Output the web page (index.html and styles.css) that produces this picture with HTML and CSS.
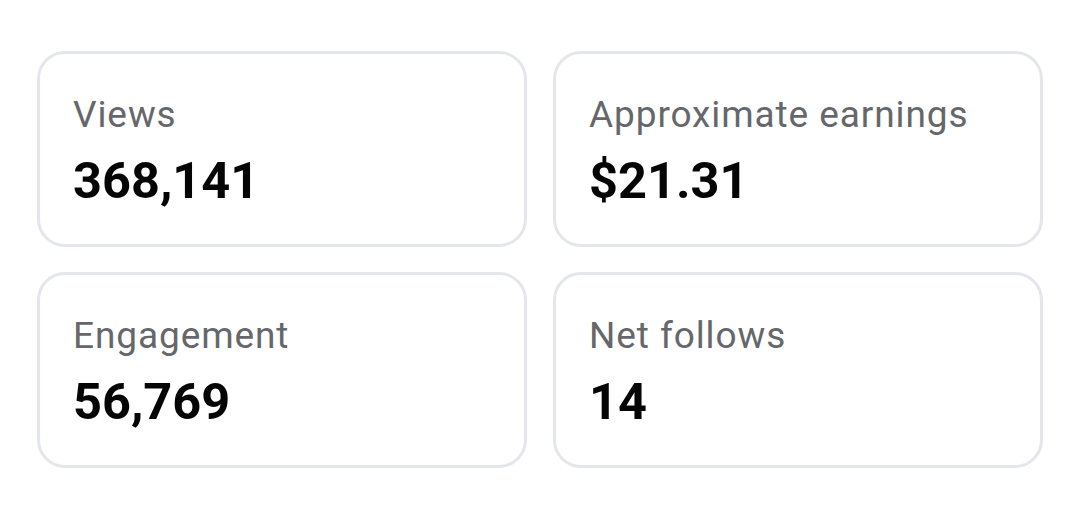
FILE: index.html
```html
<!DOCTYPE html>
<html>
<head>
<meta charset="utf-8">
<link rel="stylesheet" href="styles.css">
</head>
<body>
<div class="grid">
  <div class="card"><div class="label">Views</div><div class="value">368,141</div></div>
  <div class="card"><div class="label">Approximate earnings</div><div class="value">$21.31</div></div>
  <div class="card"><div class="label">Engagement</div><div class="value">56,769</div></div>
  <div class="card"><div class="label">Net follows</div><div class="value">14</div></div>
</div>
</body>
</html>
```
FILE: styles.css
```css
html, body {
  margin: 0;
  padding: 0;
  background: #ffffff;
  font-family: Roboto, "Liberation Sans", sans-serif;
}
.grid {
  display: grid;
  grid-template-columns: 490px 490px;
  grid-auto-rows: 196px;
  gap: 25px 26px;
  padding: 51px 0 0 37px;
}
.card {
  box-sizing: border-box;
  border: 3px solid #e4e6eb;
  border-radius: 28px;
  padding: 39px 0 0 33px;
}
.label {
  font-size: 37px;
  line-height: 44px;
  letter-spacing: 0.9px;
  color: #65676b;
}
.value {
  margin-top: 15px;
  font-size: 50.5px;
  line-height: 58px;
  font-weight: 700;
  color: #050505;
}
```
